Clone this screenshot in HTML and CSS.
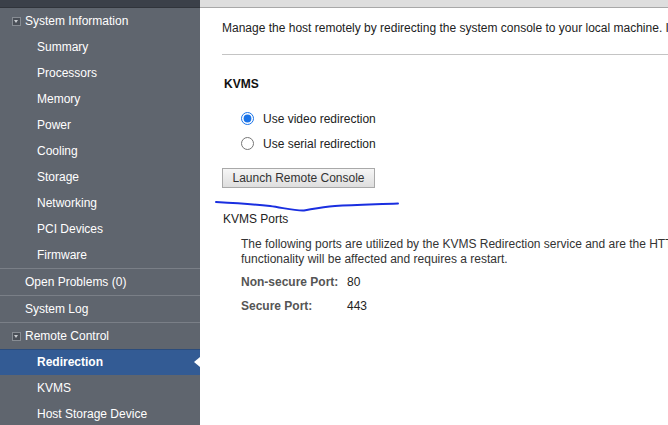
FILE: index.html
```html
<!DOCTYPE html>
<html>
<head>
<meta charset="utf-8">
<link rel="stylesheet" href="styles.css">
</head>
<body>
<div class="app">
  <nav class="sidebar">
    <div class="side-top"></div>
    <ul class="nav">
      <li class="top first"><span class="toggle"></span>System Information</li>
      <li class="sub">Summary</li>
      <li class="sub">Processors</li>
      <li class="sub">Memory</li>
      <li class="sub">Power</li>
      <li class="sub">Cooling</li>
      <li class="sub">Storage</li>
      <li class="sub">Networking</li>
      <li class="sub">PCI Devices</li>
      <li class="sub">Firmware</li>
      <li class="top">Open Problems (0)</li>
      <li class="top">System Log</li>
      <li class="top"><span class="toggle"></span>Remote Control</li>
      <li class="sub active">Redirection<span class="pointer"></span></li>
      <li class="sub">KVMS</li>
      <li class="sub">Host Storage Device</li>
    </ul>
  </nav>
  <main class="main">
    <div class="main-top"></div>
    <div class="content">
      <p class="intro">Manage the host remotely by redirecting the system console to your local machine. In order to use the remote console, the host must be powered on.</p>
      <div class="divider"></div>
      <h3 class="section-title">KVMS</h3>
      <div class="options">
        <label class="opt"><input type="radio" name="mode" checked><span>Use video redirection</span></label>
        <label class="opt"><input type="radio" name="mode"><span>Use serial redirection</span></label>
      </div>
      <button class="btn">Launch Remote Console</button>
      <h4 class="ports-title">KVMS Ports</h4>
      <p class="ports-desc">The following ports are utilized by the KVMS Redirection service and are the HTTP and HTTPS ports of the web server. If these ports are changed, the KVMS<br>functionality will be affected and requires a restart.</p>
      <div class="ports">
        <div class="port-row"><span class="port-label">Non-secure Port:</span><span class="port-val">80</span></div>
        <div class="port-row"><span class="port-label">Secure Port:</span><span class="port-val">443</span></div>
      </div>
    </div>
    <svg class="scribble" width="186" height="20" viewBox="0 0 186 20">
      <path d="M1 3 C 19 4, 37 5, 55 7 C 69 9, 81 12, 89 11.5 C 98 10, 106 8, 120 7 C 139 6, 157 5.5, 183 4.5" fill="none" stroke="#1a2fe0" stroke-width="2" stroke-linecap="round"/>
    </svg>
  </main>
</div>
</body>
</html>
```
FILE: styles.css
```css
html, body {
  margin: 0;
  padding: 0;
  width: 668px;
  height: 425px;
  overflow: hidden;
  background: #fff;
  font-family: "Liberation Sans", Arial, sans-serif;
  font-size: 12px;
}
.app {
  display: flex;
  height: 425px;
}
.sidebar {
  width: 200px;
  flex: 0 0 200px;
  background: #5f656e;
  color: #fff;
  position: relative;
}
.side-top {
  height: 7px;
  background: #3b4049;
  border-bottom: 1px solid #30343b;
}
.nav {
  list-style: none;
  margin: 0;
  padding: 0;
}
.nav li {
  height: 26px;
  line-height: 26px;
  white-space: nowrap;
  position: relative;
}
.nav .top {
  padding-left: 25px;
  border-top: 1px solid #7a7f87;
}
.nav .top.first {
  border-top: none;
}
.nav .sub {
  padding-left: 37px;
}
.toggle {
  position: absolute;
  left: 12px;
  top: 9px;
  width: 7px;
  height: 7px;
  background: #4a4f57;
  border: 1px solid #878c93;
}
.toggle::after {
  content: "";
  position: absolute;
  left: 1px;
  top: 2px;
  border-left: 2.5px solid transparent;
  border-right: 2.5px solid transparent;
  border-top: 3px solid #c9ccd0;
}
.nav .active {
  background: #335b94;
  box-shadow: inset 0 1px 0 #2b4c7c;
  font-weight: bold;
}
.pointer {
  position: absolute;
  right: 0;
  top: 8px;
  width: 0;
  height: 0;
  border-top: 5px solid transparent;
  border-bottom: 5px solid transparent;
  border-right: 6px solid #fff;
}
.main {
  flex: 1;
  min-width: 0;
  position: relative;
  overflow: hidden;
}
.main-top {
  height: 7px;
  background: #dedede;
  border-bottom: 1px solid #a8a8a8;
}
.content {
  padding-left: 22px;
  color: #222;
}
.intro {
  margin: 13px 0 0 0;
  line-height: 14px;
  white-space: nowrap;
}
.divider {
  margin-top: 19px;
  width: 800px;
  height: 1px;
  background: #c4c4c4;
}
.section-title {
  margin: 22px 0 0 2px;
  font-size: 12px;
  line-height: 14px;
  font-weight: bold;
  color: #111;
}
.options {
  margin-top: 15px;
  padding-left: 19px;
  display: flex;
  flex-direction: column;
}
.opt {
  height: 25px;
  display: flex;
  align-items: center;
  gap: 9px;
  color: #222;
}
.opt input {
  margin: 0;
  width: 13px;
  height: 13px;
  accent-color: #1a73e8;
}
.btn {
  margin-top: 12px;
  display: block;
  width: 153px;
  height: 20px;
  padding: 0;
  font-family: "Liberation Sans", Arial, sans-serif;
  font-size: 12px;
  color: #333;
  background: linear-gradient(#f6f6f6, #dedede);
  border: 1px solid #a9a9a9;
  border-radius: 0;
}
.ports-title {
  margin: 24px 0 0 1px;
  font-size: 12px;
  line-height: 14px;
  font-weight: normal;
  color: #222;
}
.ports-desc {
  margin: 11px 0 0 19px;
  line-height: 15px;
  white-space: nowrap;
  color: #333;
}
.ports {
  margin: 3px 0 0 19px;
}
.port-row {
  height: 24px;
  display: flex;
  align-items: center;
}
.port-label {
  width: 106px;
  font-weight: bold;
  color: #555;
}
.port-val {
  color: #222;
}
.scribble {
  position: absolute;
  left: 15px;
  top: 199px;
}
```
